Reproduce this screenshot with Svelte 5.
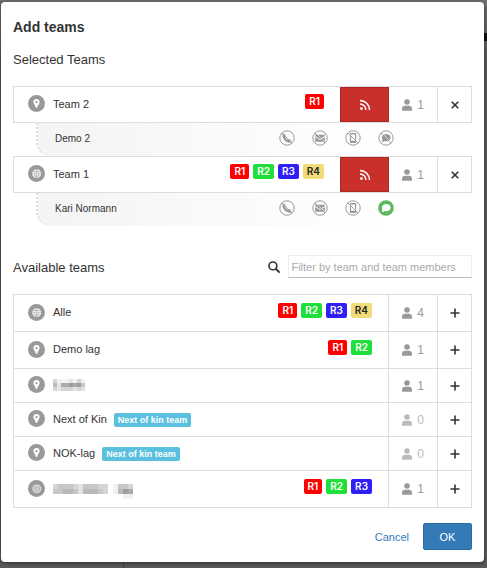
<script>
    let filter = $state('');

    let selected = $state([
        { name: 'Team 2', icon: 'pin', tags: ['R1'], count: 1, members: [{ name: 'Demo 2', chat: false }] },
        { name: 'Team 1', icon: 'globe', tags: ['R1', 'R2', 'R3', 'R4'], count: 1, members: [{ name: 'Kari Normann', chat: true }] }
    ]);

    // mask: grey levels of the pixelated cells, 0 is empty
    let available = $state([
        { name: 'Alle', icon: 'globe', tags: ['R1', 'R2', 'R3', 'R4'], count: 4 },
        { name: 'Demo lag', icon: 'pin', tags: ['R1', 'R2'], count: 1 },
        { name: '', icon: 'pin', tags: [], count: 1, mask: ['31112131', '52667674', '32333232'] },
        { name: 'Next of Kin', icon: 'pin', tags: [], count: 0, kin: true },
        { name: 'NOK-lag', icon: 'pin', tags: [], count: 0, kin: true },
        { name: '', icon: 'target', tags: ['R1', 'R2', 'R3'], count: 1, mask: ['3444324443301443', '4455425554301576', '0000000000000011'] }
    ]);

    let shown = $derived(available.filter((t) => t.name.toLowerCase().includes(filter.toLowerCase())));

    function shade(level) {
        const v = 255 - Number(level) * 14;
        return `rgb(${v},${v},${v})`;
    }
    function remove(team) {
        selected = selected.filter((t) => t !== team);
        available = [...available, team];
    }
    function add(team) {
        available = available.filter((t) => t !== team);
        selected = [...selected, { ...team, members: team.members || [] }];
    }
</script>

{#snippet teamIcon(icon)}
    <svg class="team-icon" viewBox="0 0 17 17" aria-hidden="true">
        <circle cx="8.5" cy="8.5" r="8.5" fill="#999" />
        {#if icon == 'pin'}
            <path fill="#fff" fill-rule="evenodd" d="M8.5 4a3.1 3.1 0 0 0-3.1 3.1c0 1.9 1.7 3.1 2.6 5.8h1c.9-2.7 2.6-3.9 2.6-5.8A3.1 3.1 0 0 0 8.5 4zm0 2.1a1.1 1.1 0 1 1 0 2.2 1.1 1.1 0 0 1 0-2.2z" />
        {:else if icon == 'globe'}
            <circle cx="8.7" cy="8.7" r="4.4" fill="#fff" />
            <path fill="none" stroke="#999" stroke-width=".5" d="M8.7 4.3v8.8M4.3 8.7h8.8M5 6.5h7.5M5 10.9h7.5M8.7 4.4c-2.7 2.4-2.7 6.2 0 8.6c2.7-2.4 2.7-6.2 0-8.6" />
        {:else}
            <g fill="none" stroke="#fff" stroke-width=".8">
                <circle cx="8.7" cy="8.7" r="4" />
                <circle cx="8.7" cy="8.7" r="2.4" />
                <circle cx="8.7" cy="8.7" r=".8" />
            </g>
        {/if}
    </svg>
{/snippet}

{#snippet teamName(team)}
    <div class="name-cell">
        {@render teamIcon(team.icon)}
        {#if team.mask}
            {@const cell = team.mask[0].length > 10 ? 5 : 4}
            <svg class="mask" width={team.mask[0].length * cell} height={3 * cell} viewBox={`0 0 ${team.mask[0].length} 3`} shape-rendering="crispEdges" aria-hidden="true">
                {#each team.mask as line, y}
                    {#each line as level, x}
                        <rect {x} {y} width="1" height="1" fill={shade(level)} />
                    {/each}
                {/each}
            </svg>
        {:else}
            <span class="name">{team.name}</span>
        {/if}
        {#if team.kin}
            <span class="kin">Next of kin team</span>
        {/if}
        <div class="tags">
            {#each team.tags as tag}
                <span class="tag {tag.toLowerCase()}">{tag}</span>
            {/each}
        </div>
    </div>
{/snippet}

{#snippet count(n)}
    <div class="count" class:empty={n == 0}>
        <svg width="10" height="12" viewBox="0 0 10 12" aria-hidden="true">
            <circle cx="5" cy="3" r="2.8" fill="currentColor" />
            <path fill="currentColor" d="M0 11.7V9.8C0 8 1.3 6.8 3 6.8h4c1.7 0 3 1.2 3 3v1.9z" />
        </svg>
        <span>{n}</span>
    </div>
{/snippet}

{#snippet channel(kind, active)}
    <svg class="channel" viewBox="0 0 16 16" aria-hidden="true">
        {#if active}
            <circle cx="8" cy="8" r="7.8" fill="#5cb85c" />
            <path fill="#fff" d="M8.3 4.1c2.5 0 4.3 1.6 4.3 3.6s-1.8 3.6-4.3 3.6c-.6 0-1.2-.1-1.7-.3-.8.7-1.9 1-3.2.9.6-.6 1-1.200 1.100-1.900-.4-.6-.6-1.400-.6-2.200 0-2.100 1.900-3.700 4.400-3.700z" />
        {:else}
            <circle cx="8" cy="8" r="7.2" fill="none" stroke="#999" />
            {#if kind == 'phone'}
                <path fill="#999" d="M4.2 3.8 5.7 3.400l1.400 2.400-1 1.200c.6 1.300 1.400 2.100 2.700 2.800l1.300-1 2.400 1.400-.3 1.600c-.2.700-.9 1-1.700.9C6.700 12.300 3.700 9.200 3.500 5.300c0-.7.1-1.200.7-1.500z" />
            {:else if kind == 'mail'}
                <path fill="#999" d="M3.200 4.700h9.600v1.200L8 9 3.200 5.900zM3.200 6.900 8 10l4.800-3.100v4.800H3.200z" />
            {:else if kind == 'mobile'}
                <path fill="#999" fill-rule="evenodd" d="M5.600 3h4.900c.4 0 .7.300.7.700v8.700c0 .4-.3.700-.7.700H5.600c-.4 0-.7-.3-.7-.7V3.700c0-.4.300-.7.700-.7zm.5 1.400v6.300H10V4.400z" />
            {:else}
                <path fill="#999" d="M8.300 4.100c2.500 0 4.300 1.600 4.300 3.600s-1.800 3.600-4.300 3.600c-.6 0-1.200-.1-1.700-.3-.8.700-1.900 1-3.200.9.600-.6 1-1.200 1.100-1.900-.4-.6-.6-1.400-.6-2.200 0-2.100 1.900-3.700 4.400-3.700z" />
            {/if}
            <path fill="none" stroke="#fff" stroke-width=".5" d="M3.500 2.500 13.500 12.500" />
            <path fill="none" stroke="#999" stroke-width=".9" d="M2.900 2.900 13.100 13.100" />
        {/if}
    </svg>
{/snippet}

<div class="backdrop">
    <div class="modal" role="dialog" aria-labelledby="title">
        <h1 id="title">Add teams</h1>
        <h2>Selected Teams</h2>

        <div class="selected">
            {#each selected as team}
                <div class="row boxed">
                    {@render teamName(team)}
                    <button class="feed" aria-label="Toggle feed">
                        <svg width="12" height="12" viewBox="0 0 12 12" aria-hidden="true">
                            <circle cx="2.4" cy="9.6" r="1.4" fill="#fff" />
                            <path fill="none" stroke="#fff" stroke-width="1.5" d="M1 5.1a5.9 5.9 0 0 1 5.9 5.9M1 1.5a9.5 9.5 0 0 1 9.5 9.5" />
                        </svg>
                    </button>
                    {@render count(team.count)}
                    <button class="action" aria-label="Remove team" onclick={() => remove(team)}>
                        <svg width="10" height="10" viewBox="0 0 10 10" aria-hidden="true">
                            <path fill="none" stroke="#333" stroke-width="1.6" d="m1.7 1.7 6.6 6.6m0-6.6L1.7 8.3" />
                        </svg>
                    </button>
                </div>
                {#each team.members as member}
                    <div class="member">
                        <span class="member-name">{member.name}</span>
                        {@render channel('phone', false)}
                        {@render channel('mail', false)}
                        {@render channel('mobile', false)}
                        {@render channel('chat', member.chat)}
                    </div>
                {/each}
            {/each}
        </div>

        <div class="available-head">
            <h2>Available teams</h2>
            <label for="filter" aria-label="Filter">
                <svg width="12" height="12" viewBox="0 0 12 12" aria-hidden="true">
                    <circle cx="4.9" cy="4.9" r="3.9" fill="none" stroke="#333" stroke-width="1.6" />
                    <path stroke="#333" stroke-width="1.8" stroke-linecap="round" d="m8 8 3 3" />
                </svg>
            </label>
            <input id="filter" type="text" placeholder="Filter by team and team members" bind:value={filter} />
        </div>

        <div class="available">
            {#each shown as team}
                <div class="row" class:tagged={team.tags.length > 0}>
                    {@render teamName(team)}
                    {@render count(team.count)}
                    <button class="action" aria-label="Add team" onclick={() => add(team)}>
                        <svg width="10" height="10" viewBox="0 0 10 10" aria-hidden="true">
                            <path fill="none" stroke="#333" stroke-width="1.6" d="M5 .5v9M.5 5h9" />
                        </svg>
                    </button>
                </div>
            {/each}
        </div>

        <div class="footer">
            <button class="cancel">Cancel</button>
            <button class="ok">OK</button>
        </div>
    </div>
</div>

<style>
    :global(body) {
        margin: 0;
        background: #5a5a5a;
    }
    .backdrop {
        box-sizing: border-box;
        min-height: 100vh;
        padding: 2px 3px 6px 1px;
        background:
            linear-gradient(#111, #111) right 33px / 3px 8px no-repeat,
            linear-gradient(#444, #444) 123px bottom / 1px 6px no-repeat,
            linear-gradient(#707070, #5a5a5a 60px);
        font-family: "Liberation Sans", Arial, sans-serif;
        font-size: 11px;
        color: #333;
    }
    .modal {
        box-sizing: border-box;
        padding: 16px 12px 12px;
        background: #fff;
        border-radius: 4px;
        box-shadow: 0 1px 4px rgba(0, 0, 0, .5);
    }
    h1 {
        margin: 0 0 16px;
        font-size: 14px;
        line-height: 18px;
    }
    h2 {
        margin: 0;
        font-size: 13px;
        font-weight: normal;
        line-height: 16px;
    }
    button {
        font-family: inherit;
        font-size: inherit;
        padding: 0;
        border: 0;
        background: none;
        cursor: pointer;
    }
    .selected {
        margin-top: 18px;
    }
    .row {
        box-sizing: border-box;
        display: flex;
        height: 34px;
        border-bottom: 1px solid #ddd;
    }
    .row.tagged {
        height: 37px;
    }
    .row.boxed {
        height: 37px;
        border: 1px solid #ddd;
    }
    .name-cell {
        flex: 1;
        min-width: 0;
        display: flex;
        align-items: center;
        padding: 0 16px 2px 14px;
    }
    .team-icon {
        width: 17px;
        height: 17px;
        margin-right: 8px;
        flex: none;
    }
    .tagged .mask {
        margin-top: 6px;
    }
    .kin {
        margin: 2px 0 0 7px;
        padding: 0 4px;
        border-radius: 2px;
        background: #5bc0de;
        color: #fff;
        font-size: 9px;
        font-weight: bold;
        line-height: 14px;
    }
    .tags {
        display: flex;
        gap: 4px;
        margin: 0 0 4px auto;
    }
    .tag {
        padding: 0 4px;
        border-radius: 2px;
        color: #fff;
        font-family: Inter, sans-serif;
        font-size: 10px;
        font-weight: 600;
        line-height: 15px;
    }
    .r1 {
        background: #f00;
    }
    .r2 {
        background: #1fe03a;
    }
    .r3 {
        background: #2f1ff5;
    }
    .r4 {
        background: #f0dc78;
        color: #222;
    }
    .feed {
        width: 49px;
        background: #c9302c;
        border: 1px solid #ac2925;
        display: flex;
        align-items: center;
        justify-content: center;
    }
    .count {
        box-sizing: border-box;
        width: 49px;
        border-left: 1px solid #ddd;
        display: flex;
        align-items: center;
        justify-content: center;
        gap: 5px;
        color: #999;
        font-size: 12px;
    }
    .feed + .count {
        width: 48px;
        border-left: 0;
    }
    .count.empty {
        color: #bbb;
    }
    .action {
        box-sizing: border-box;
        width: 34px;
        border-left: 1px solid #ddd;
        display: flex;
        align-items: center;
        justify-content: center;
    }
    .member {
        box-sizing: border-box;
        display: flex;
        align-items: center;
        gap: 17px;
        height: 33px;
        margin-left: 23px;
        padding: 0 78px 3px 17px;
        border-left: 2px dotted #ddd;
        border-bottom-left-radius: 14px;
        background: linear-gradient(to right, #f4f4f4, #fff 80%);
        font-size: 10px;
    }
    .member-name {
        flex: 1;
    }
    .channel {
        width: 16px;
        height: 16px;
    }
    .available-head {
        display: flex;
        align-items: center;
        margin: 29px 0 16px;
    }
    .available-head h2 {
        flex: 1;
        padding-top: 2px;
    }
    .available-head label {
        display: flex;
        margin-right: 8px;
    }
    input {
        box-sizing: border-box;
        width: 40%;
        height: 23px;
        padding: 0 2px;
        border: 1px solid #eee;
        border-bottom-color: #bbb;
        font-family: inherit;
        font-size: 11px;
        color: #333;
        outline: none;
    }
    input::placeholder {
        color: #aaa;
    }
    .available {
        border: 1px solid #ddd;
        border-bottom: 0;
    }
    .footer {
        display: flex;
        justify-content: flex-end;
        align-items: center;
        gap: 14px;
        margin-top: 15px;
    }
    .cancel {
        color: #337ab7;
    }
    .ok {
        width: 49px;
        height: 27px;
        border: 1px solid #2e6da4;
        border-radius: 2px;
        background: #337ab7;
        color: #fff;
    }
</style>
